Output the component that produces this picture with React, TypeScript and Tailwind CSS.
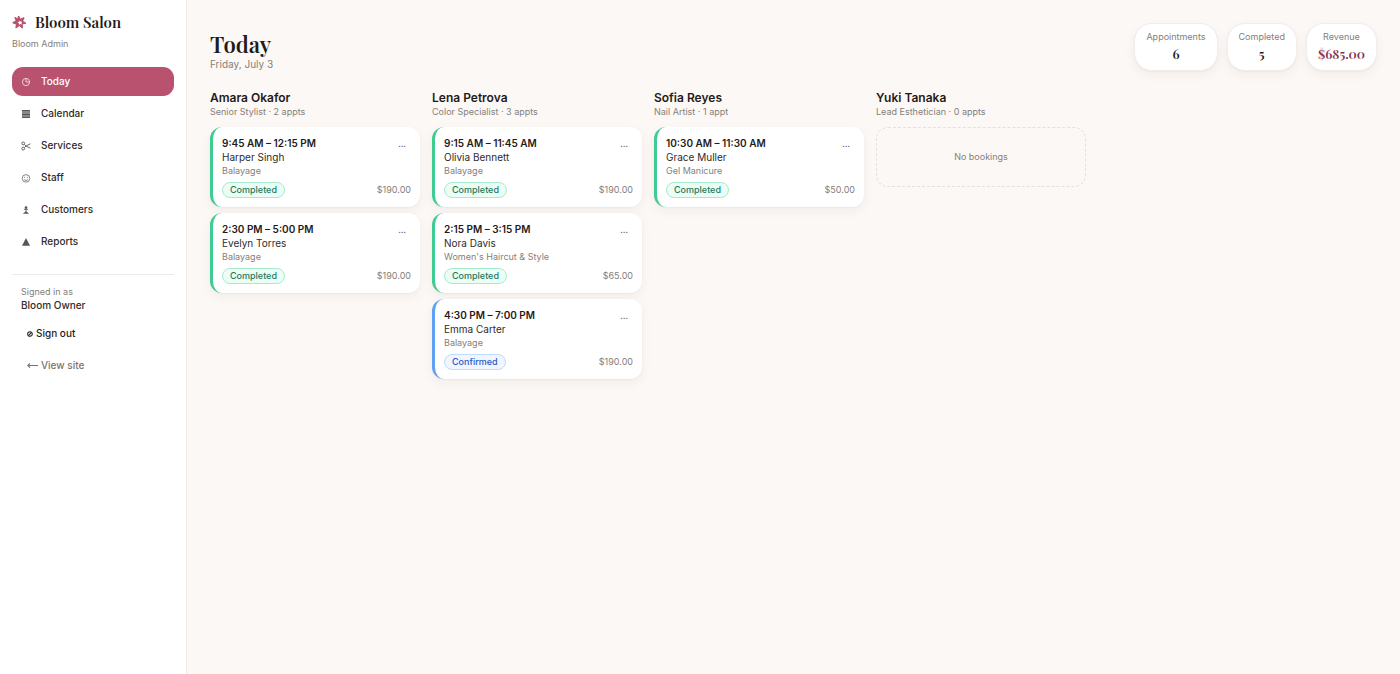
import type { ReactNode } from "react";

type Status = "completed" | "confirmed";

type Appointment = {
  time: string;
  customer: string;
  service: string;
  status: Status;
  price: string;
};

type StaffColumn = {
  name: string;
  role: string;
  appointments: Appointment[];
};

const statusStyles: Record<Status, { label: string; card: string; badge: string }> = {
  completed: {
    label: "Completed",
    card: "border-l-[#3ecb94]",
    badge: "border-[#a7ebcd] bg-[#ecfdf5] text-[#1f7a5c]",
  },
  confirmed: {
    label: "Confirmed",
    card: "border-l-[#60a0f0]",
    badge: "border-[#bfdbfe] bg-[#eff6ff] text-[#2f55c0]",
  },
};

const staff: StaffColumn[] = [
  {
    name: "Amara Okafor",
    role: "Senior Stylist",
    appointments: [
      { time: "9:45 AM – 12:15 PM", customer: "Harper Singh", service: "Balayage", status: "completed", price: "$190.00" },
      { time: "2:30 PM – 5:00 PM", customer: "Evelyn Torres", service: "Balayage", status: "completed", price: "$190.00" },
    ],
  },
  {
    name: "Lena Petrova",
    role: "Color Specialist",
    appointments: [
      { time: "9:15 AM – 11:45 AM", customer: "Olivia Bennett", service: "Balayage", status: "completed", price: "$190.00" },
      { time: "2:15 PM – 3:15 PM", customer: "Nora Davis", service: "Women's Haircut & Style", status: "completed", price: "$65.00" },
      { time: "4:30 PM – 7:00 PM", customer: "Emma Carter", service: "Balayage", status: "confirmed", price: "$190.00" },
    ],
  },
  {
    name: "Sofia Reyes",
    role: "Nail Artist",
    appointments: [
      { time: "10:30 AM – 11:30 AM", customer: "Grace Muller", service: "Gel Manicure", status: "completed", price: "$50.00" },
    ],
  },
  { name: "Yuki Tanaka", role: "Lead Esthetician", appointments: [] },
];

function Icon({ children }: { children: ReactNode }) {
  return (
    <svg viewBox="0 0 10 10" className="size-[10px] shrink-0 opacity-80" fill="none" stroke="currentColor" strokeWidth="0.9" aria-hidden="true">
      {children}
    </svg>
  );
}

const nav = [
  {
    label: "Today",
    icon: (
      <Icon>
        <circle cx="5" cy="5" r="3.6" />
        <path d="M5 1.5V5h3.5" />
      </Icon>
    ),
  },
  {
    label: "Calendar",
    icon: (
      <Icon>
        <path d="M1 1h8v8H1z" fill="currentColor" fillOpacity="0.7" stroke="none" />
        <path d="M1 1.5h8M1 5.5h8M1 8.5h8" />
      </Icon>
    ),
  },
  {
    label: "Services",
    icon: (
      <Icon>
        <circle cx="2.2" cy="2.4" r="1.4" />
        <circle cx="2.2" cy="7.6" r="1.4" />
        <path d="M3.3 3.3 5.2 5.2 9.4 7.2M3.3 6.7 5.2 4.8 9.4 2.8" />
      </Icon>
    ),
  },
  {
    label: "Staff",
    icon: (
      <Icon>
        <circle cx="5" cy="5.4" r="3.8" strokeWidth="0.7" />
        <path d="M2.9 6.3c.8 1.4 3.4 1.4 4.2 0" strokeWidth="0.7" />
        <path d="M3.6 3.9v.8M6.4 3.9v.8" />
      </Icon>
    ),
  },
  {
    label: "Customers",
    icon: (
      <Icon>
        <circle cx="5" cy="2.6" r="1.3" fill="currentColor" stroke="none" />
        <path d="M3 4.3h4M5 4v4" />
        <path d="M2 8.8c0-1.2 1.8-1 2.4-2.4h1.2c.6 1.4 2.4 1.2 2.4 2.4z" fill="currentColor" stroke="none" />
      </Icon>
    ),
  },
  {
    label: "Reports",
    icon: (
      <Icon>
        <path d="M5 .9 9 8.8H1z" fill="currentColor" stroke="none" />
      </Icon>
    ),
  },
];

const stats = [
  { label: "Appointments", value: "6", color: "text-[#1f1b1a]" },
  { label: "Completed", value: "5", color: "text-[#1f1b1a]" },
  { label: "Revenue", value: "$685.00", color: "text-[#86304f]" },
];

function Sidebar() {
  return (
    <aside className="w-[187px] shrink-0 border-r border-[#f0eae6] bg-white px-3 pt-3">
      <a href="#" className="flex h-5 items-center gap-2">
        <svg viewBox="0 0 14 14" className="size-[15px]" aria-hidden="true">
          <path
            fill="#b9526f"
            fillRule="evenodd"
            d="M5.4 1.2Q6.2 0 7 1.4L7.9 3.5 10.6 2.2Q12 2 11.4 3.4L10.4 5.6 12.8 7Q13.8 8 12.4 8.4L10 8.7 10.3 11.6Q10 13 8.8 12.2L6.9 10.2 4.4 12.2Q3 12.8 3.2 11.2L3.7 8.8.9 7.9Q-.2 7 1.2 6.2L3.4 5.2 2.2 2.8Q2.2 1.4 3.6 2L5.2 3.2ZM7.4 5.2 6.7 6.3 5.3 6.8 6.4 7.8 6.6 9.2 7.9 8.5 9.2 8.8 8.8 7.4 9.6 6.2 8.2 6.2Z"
          />
        </svg>
        <span className="font-['Playfair_Display','Liberation_Serif',serif] text-[15px] font-semibold text-[#1f1b1a]">Bloom Salon</span>
      </a>
      <p className="mt-1 text-[9px] leading-[15px] text-[#85807b]">Bloom Admin</p>
      <nav className="mt-4 flex flex-col gap-[3px]">
        {nav.map((item, i) => (
          <a
            key={item.label}
            href="#"
            aria-current={i === 0 ? "page" : undefined}
            className={`flex h-[29px] items-center gap-[10px] rounded-[11px] px-[9px] text-[10px] font-medium ${
              i === 0 ? "bg-[#b9526f] text-white" : "text-[#2f2b29]"
            }`}
          >
            {item.icon}
            {item.label}
          </a>
        ))}
      </nav>
      <div className="mt-[18px] border-t border-[#f0eae6] px-[9px] pt-[11px]">
        <p className="text-[9px] leading-3 text-[#85807b]">Signed in as</p>
        <p className="text-[10px] leading-[14px] font-medium text-[#2f2b29]">Bloom Owner</p>
        <button type="button" className="mt-[7px] flex h-[29px] items-center gap-[3px] px-[6px] text-[10px] font-medium text-[#1f1b1a]">
          <svg viewBox="0 0 7 7" className="size-[6px]" fill="none" stroke="currentColor" strokeWidth="1.2" aria-hidden="true">
            <circle cx="3.5" cy="3.5" r="2.7" />
            <path d="M2 5 5 2" />
          </svg>
          Sign out
        </button>
        <a href="#" className="mt-[3px] flex h-[29px] items-center gap-[3px] px-[6px] text-[10px] font-medium text-[#7c746c]">
          <svg viewBox="0 0 11 7" className="h-[7px] w-[11px]" fill="none" stroke="currentColor" strokeWidth="1.2" aria-hidden="true">
            <path d="M.8 3.5H11M3 1.3.8 3.5 3 5.7" />
          </svg>
          View site
        </a>
      </div>
    </aside>
  );
}

function AppointmentCard({ appt }: { appt: Appointment }) {
  const status = statusStyles[appt.status];
  return (
    <article className={`rounded-xl border-l-[3px] bg-white p-[9px] shadow-[0_1px_2px_rgba(60,30,20,0.04),0_4px_12px_rgba(60,30,20,0.05)] ${status.card}`}>
      <div className="flex items-start justify-between">
        <div>
          <p className="text-[10px] leading-[14px] font-semibold text-[#1f1b1a]">{appt.time}</p>
          <p className="text-[10px] leading-[15px] text-[#2f2b29]">{appt.customer}</p>
          <p className="text-[9px] leading-3 text-[#85807b]">{appt.service}</p>
        </div>
        <button type="button" aria-label="Appointment actions" className="px-[5px] pt-[2px] text-[9px] leading-3 text-[#6b6560]">
          …
        </button>
      </div>
      <div className="mt-[5px] flex items-center justify-between">
        <span className={`flex h-4 items-center rounded-full border px-[7px] text-[9px] font-medium ${status.badge}`}>{status.label}</span>
        <span className="text-[9px] text-[#85807b]">{appt.price}</span>
      </div>
    </article>
  );
}

export default function App() {
  return (
    <div className="flex min-h-screen bg-[#fcf8f5] font-['Inter',sans-serif]">
      <Sidebar />
      <main className="min-w-0 flex-1 p-[23px]">
        <header className="flex items-start justify-between">
          <div className="pt-2">
            <h1 className="font-['Playfair_Display','Liberation_Serif',serif] text-[22px] leading-[26px] font-semibold text-[#1f1b1a]">Today</h1>
            <p className="text-[10px] leading-[14px] text-[#85807b]">Friday, July 3</p>
          </div>
          <dl className="flex gap-[9px]">
            {stats.map((s) => (
              <div
                key={s.label}
                className="flex h-12 flex-col items-center rounded-[18px] border border-[#f3edea] bg-white px-[11px] pt-[7px] shadow-[0_1px_2px_rgba(60,30,20,0.04),0_4px_12px_rgba(60,30,20,0.05)]"
              >
                <dt className="text-[9px] leading-3 text-[#85807b]">{s.label}</dt>
                <dd className={`mt-px font-['Playfair_Display','Liberation_Serif',serif] text-[13px] leading-5 font-semibold ${s.color}`}>{s.value}</dd>
              </div>
            ))}
          </dl>
        </header>
        <div className="mt-5 flex gap-3">
          {staff.map((col) => (
            <section key={col.name} className="w-[210px] shrink-0">
              <h2 className="text-[12px] leading-[14px] font-semibold text-[#1f1b1a]">{col.name}</h2>
              <p className="text-[9px] leading-[14px] text-[#85807b]">
                {col.role} · {col.appointments.length} {col.appointments.length === 1 ? "appt" : "appts"}
              </p>
              <div className="mt-2 flex flex-col gap-[6px]">
                {col.appointments.map((a) => (
                  <AppointmentCard key={a.time} appt={a} />
                ))}
                {col.appointments.length === 0 && (
                  <div className="flex h-[60px] items-center justify-center rounded-xl border border-dashed border-[#e6dfda] text-[9px] text-[#85807b]">
                    No bookings
                  </div>
                )}
              </div>
            </section>
          ))}
        </div>
      </main>
    </div>
  );
}
